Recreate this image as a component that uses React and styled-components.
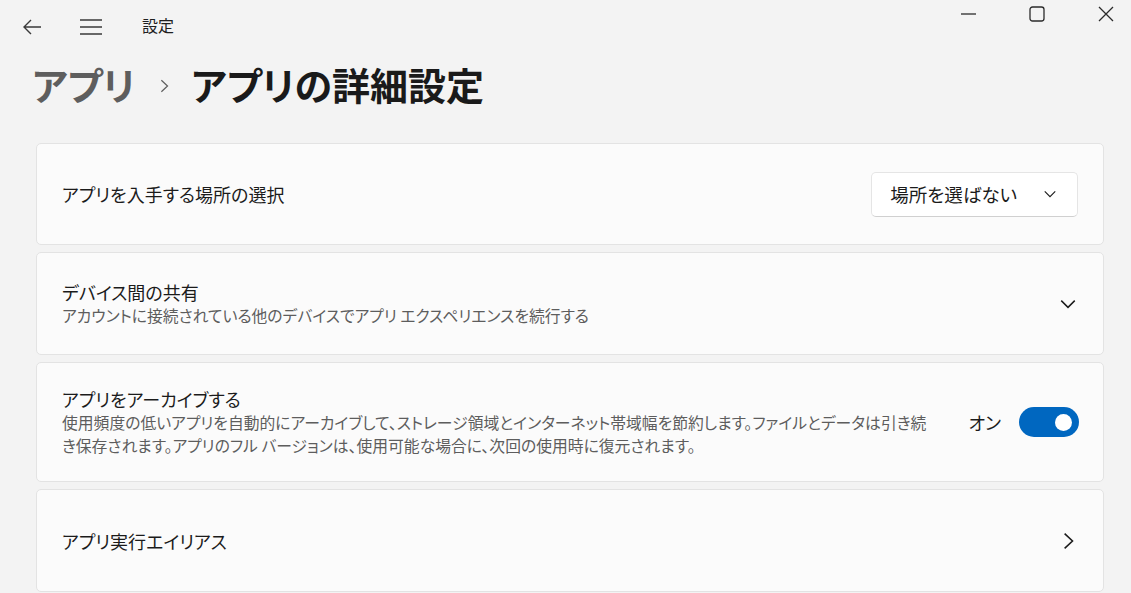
import styled, { createGlobalStyle } from "styled-components";

const GlobalStyle = createGlobalStyle`
  html, body {
    margin: 0;
    background: #f3f3f3;
  }
  body {
    font-family: "Noto Sans CJK JP", "Noto Sans", sans-serif;
    font-feature-settings: "palt";
    color: #1b1b1b;
  }
`;

const Window = styled.div`
  width: 1131px;
  height: 593px;
  overflow: hidden;
  background: #f3f3f3;
`;

const TitleBar = styled.div`
  display: flex;
  align-items: flex-start;
  height: 54px;
`;

const NavGroup = styled.div`
  display: flex;
  align-items: center;
  height: 54px;
  padding-left: 20px;
`;

const IconButton = styled.div`
  display: flex;
  align-items: center;
  justify-content: center;
  width: ${(p) => p.$w || 24}px;
  margin-right: ${(p) => p.$mr || 0}px;
  color: #3a3a3a;
`;

const AppName = styled.span`
  font-size: 16px;
  line-height: 20px;
  margin-top: -4px;
  color: #1f1f1f;
`;

const Controls = styled.div`
  display: flex;
  gap: 53px;
  margin-left: auto;
  padding: 6px 17px 0 0;
  color: #2b2b2b;
`;

const Header = styled.h1`
  display: flex;
  align-items: center;
  margin: 5px 0 0 32px;
  font-size: 38px;
  line-height: 50px;
  font-weight: 700;
`;

const Crumb = styled.span`
  color: ${(p) => (p.$current ? "#1a1a1a" : "#5e5e5e")};
`;

const CrumbSep = styled.span`
  display: flex;
  margin: 4px 20px 0 22px;
  color: #5e5e5e;
`;

const CardList = styled.div`
  display: flex;
  flex-direction: column;
  gap: 7px;
  padding: 34px 27px 0 36px;
`;

const Card = styled.div`
  display: flex;
  align-items: center;
  min-height: ${(p) => p.$h}px;
  box-sizing: border-box;
  padding: 12px 24px 12px 25px;
  background: #fbfbfb;
  border: 1px solid #e3e3e3;
  border-radius: 5px;
`;

const CardText = styled.div`
  flex: 1;
  display: flex;
  flex-direction: column;
  padding-right: ${(p) => p.$pr || 0}px;
`;

const CardTitle = styled.div`
  font-size: 18px;
  line-height: 24px;
  color: #1b1b1b;
`;

const CardDesc = styled.div`
  font-size: 15.8px;
  line-height: 23px;
  color: #5d5d5d;
`;

const Dropdown = styled.div`
  display: flex;
  align-items: center;
  gap: 26px;
  height: 45px;
  box-sizing: border-box;
  padding: 0 20px 0 18px;
  margin-right: 1px;
  background: #ffffff;
  border: 1px solid #e5e5e5;
  border-bottom-color: #d0d0d0;
  border-radius: 5px;
  font-size: 18.5px;
  color: #1b1b1b;
`;

const ToggleLabel = styled.span`
  font-size: 18px;
  margin-right: 18px;
  color: #1b1b1b;
`;

const Toggle = styled.div`
  display: flex;
  align-items: center;
  justify-content: flex-end;
  width: 60px;
  height: 30px;
  box-sizing: border-box;
  padding-right: 7px;
  border-radius: 15px;
  background: #0067c0;
`;

const Knob = styled.div`
  width: 17px;
  height: 17px;
  border-radius: 50%;
  background: #ffffff;
`;

const Chevron = styled.div`
  display: flex;
  color: #1b1b1b;
  margin-right: 2px;
`;

const Arrow = () => (
  <svg width="20" height="18" viewBox="0 0 20 18" fill="none" stroke="currentColor" strokeWidth="1.4">
    <path d="M19 9H2M9 2L2 9l7 7" />
  </svg>
);

const Hamburger = () => (
  <svg width="24" height="18" viewBox="0 0 24 18" fill="none" stroke="currentColor" strokeWidth="1.4">
    <path d="M1 2h22M1 9h22M1 16h22" />
  </svg>
);

const Minimize = () => (
  <svg width="16" height="16" viewBox="0 0 16 16" stroke="currentColor" strokeWidth="1.3">
    <path d="M1 8h15" />
  </svg>
);

const Maximize = () => (
  <svg width="16" height="16" viewBox="0 0 16 16" fill="none" stroke="currentColor" strokeWidth="1.3">
    <rect x="1" y="1" width="14" height="14" rx="2.5" />
  </svg>
);

const Close = () => (
  <svg width="16" height="16" viewBox="0 0 16 16" stroke="currentColor" strokeWidth="1.3">
    <path d="M1 1l14 14M15 1L1 15" />
  </svg>
);

const ChevronDown = ({ size = 16 }) => (
  <svg width={size} height={size} viewBox="0 0 16 16" fill="none" stroke="currentColor" strokeWidth="1.3">
    <path d="M2 5l6 6 6-6" />
  </svg>
);

const ChevronRight = ({ size = 16 }) => (
  <svg width={size} height={size} viewBox="0 0 16 16" fill="none" stroke="currentColor" strokeWidth="1.4">
    <path d="M5 1.5l7 6.5-7 6.5" />
  </svg>
);

const App = () => {
  return (
    <Window>
      <GlobalStyle />
      <TitleBar>
        <NavGroup>
          <IconButton $w={24} $mr={34}>
            <Arrow />
          </IconButton>
          <IconButton $w={26} $mr={38}>
            <Hamburger />
          </IconButton>
          <AppName>設定</AppName>
        </NavGroup>
        <Controls>
          <Minimize />
          <Maximize />
          <Close />
        </Controls>
      </TitleBar>

      <Header>
        <Crumb>アプリ</Crumb>
        <CrumbSep>
          <ChevronRight size={14} />
        </CrumbSep>
        <Crumb $current>アプリの詳細設定</Crumb>
      </Header>

      <CardList>
        <Card $h={102}>
          <CardText>
            <CardTitle>アプリを入手する場所の選択</CardTitle>
          </CardText>
          <Dropdown>
            <span>場所を選ばない</span>
            <ChevronDown size={14} />
          </Dropdown>
        </Card>

        <Card $h={103}>
          <CardText>
            <CardTitle>デバイス間の共有</CardTitle>
            <CardDesc>アカウントに接続されている他のデバイスでアプリ エクスペリエンスを続行する</CardDesc>
          </CardText>
          <Chevron>
            <ChevronDown size={18} />
          </Chevron>
        </Card>

        <Card $h={120}>
          <CardText $pr={30}>
            <CardTitle>アプリをアーカイブする</CardTitle>
            <CardDesc>
              使用頻度の低いアプリを自動的にアーカイブして、ストレージ領域とインターネット帯域幅を節約します。ファイルとデータは引き続き保存されます。アプリのフル バージョンは、使用可能な場合に、次回の使用時に復元されます。
            </CardDesc>
          </CardText>
          <ToggleLabel>オン</ToggleLabel>
          <Toggle>
            <Knob />
          </Toggle>
        </Card>

        <Card $h={103}>
          <CardText>
            <CardTitle>アプリ実行エイリアス</CardTitle>
          </CardText>
          <Chevron>
            <ChevronRight size={18} />
          </Chevron>
        </Card>
      </CardList>
    </Window>
  );
};

export default App;
